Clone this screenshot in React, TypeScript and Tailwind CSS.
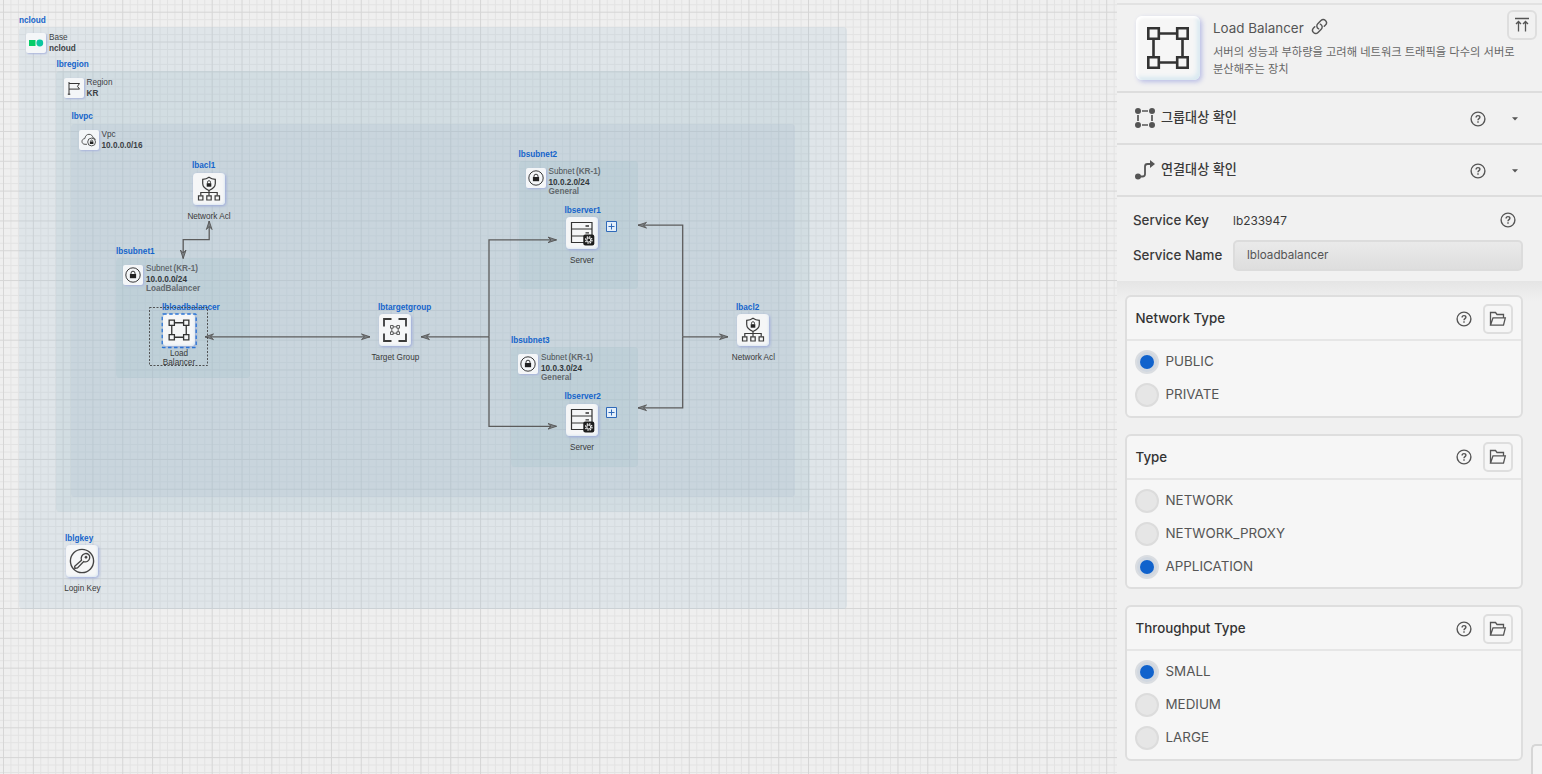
import type { ReactNode } from "react";

const label = "absolute whitespace-nowrap text-[8.2px] leading-[10px]";

function Name({ x, y, children }: { x: number; y: number; children: ReactNode }) {
  return (
    <span className={`${label} font-bold text-[#1564cb]`} style={{ left: x, top: y - 4 }}>
      {children}
    </span>
  );
}

function Zone({ x, y, w, h, className }: { x: number; y: number; w: number; h: number; className: string }) {
  return <div className={`absolute rounded-[4px] ${className}`} style={{ left: x, top: y, width: w, height: h }} />;
}

function ZoneHead({ x, y, icon, children }: { x: number; y: number; icon: ReactNode; children: ReactNode }) {
  return (
    <div className="absolute flex gap-[3px] whitespace-nowrap text-[8.2px] leading-[11px] text-[#3d4145]" style={{ left: x, top: y }}>
      <div className="flex h-[20px] w-[20px] shrink-0 items-center justify-center rounded-[2px] bg-[#f4f6f8] shadow-[1px_1px_2px_#a9b4dc]">
        {icon}
      </div>
      <div className="-mt-[1px]">{children}</div>
    </div>
  );
}

function Node({ x, y, icon, children }: { x: number; y: number; icon: ReactNode; children: ReactNode }) {
  return (
    <div className="absolute flex w-[64px] flex-col items-center" style={{ left: x - 16, top: y }}>
      <div className="flex h-[32px] w-[32px] items-center justify-center rounded-[4px] bg-[#f5f6f7] shadow-[1px_1px_3px_#9ba8da,inset_-1px_-1px_2px_#dfe9f2]">
        {icon}
      </div>
      <div className="mt-[7px] whitespace-nowrap text-center text-[8.2px] leading-[10px] text-[#3a3a3a]">{children}</div>
    </div>
  );
}

const LockIcon = () => (
  <svg width="16" height="16" viewBox="0 0 16 16" fill="none" stroke="#222">
    <circle cx="8" cy="8" r="7.2" strokeWidth="0.9" />
    <path d="M6 7.5V6.2a2 2 0 0 1 4 0v1.3" strokeWidth="0.9" />
    <rect x="4.900" y="7" width="6.200" height="4.200" fill="#222" stroke="none" />
  </svg>
);

const AclIcon = () => (
  <svg width="24" height="26" viewBox="0 0 24 26" fill="none" stroke="#3a3a3a" strokeWidth="1.2">
    <path d="M12 1.2c2 1.5 4 2 6.3 2.1v4.3c0 3-2.300 5.300-6.300 6.900-4-1.600-6.300-3.900-6.300-6.900V3.300C8 3.200 10 2.700 12 1.200Z" />
    <rect x="9.700" y="7.200" width="4.600" height="3.500" fill="#222" stroke="none" />
    <path d="M10.500 7.400V6.200a1.500 1.500 0 0 1 3 0v1.200" strokeWidth="0.900" />
    <path d="M12 14.500v5M3.800 19.500v-3h16.400v3" />
    <path d="M1.500 19.800h4.400v4.200H1.500zM9.800 19.800h4.400v4.200H9.800zM18.100 19.800h4.400v4.200h-4.400z" />
  </svg>
);

const BalancerIcon = ({ size, className = "" }: { size: number; className?: string }) => (
  <svg className={className} width={size} height={size} viewBox="0 0 44 44" fill="none" stroke="#333" strokeWidth="2.600">
    <path d="M2.300 2.300h10.500v10.500H2.300zM31.200 2.300h10.500v10.500H31.200zM2.300 31.200h10.500v10.500H2.300zM31.200 31.200h10.500v10.500H31.200zM12.800 7.500h18.400M12.800 36.500h18.400M7.500 12.800v18.400M36.500 12.800v18.400" />
  </svg>
);

const TargetIcon = () => (
  <svg width="24" height="24" viewBox="0 0 24 24" fill="none" stroke="#3a3a3a">
    <path d="M1 8.500V1h7.500M15.500 1H23v7.500M1 15.500V23h7.500M15.500 23H23v-7.500" strokeWidth="1.800" />
    <path d="M7.500 7.500h2.700v2.700H7.500zM13.800 7.500h2.700v2.700h-2.700zM7.500 13.800h2.700v2.700H7.500zM13.800 13.800h2.700v2.700h-2.700zM10.200 8.800h3.600M10.200 15.200h3.600M8.800 10.200v3.600M15.200 10.200v3.600" strokeWidth="0.800" />
  </svg>
);

const ServerIcon = () => (
  <svg width="26" height="26" viewBox="0 0 26 26" fill="none" stroke="#333" strokeWidth="1.200">
    <path d="M2.500 2.500h20.500v20H2.500zM2.500 9h20.500M2.500 16h20.500" />
    <path d="M16.500 6h3.500M16.500 12.800h3.500" strokeWidth="1.300" />
    <rect x="14.300" y="14.500" width="11" height="11" rx="2" fill="#1d1d1d" stroke="none" />
    <circle cx="19.800" cy="20" r="3.200" stroke="#fff" strokeWidth="1.200" strokeDasharray="1.500 1" />
    <circle cx="19.800" cy="20" r="2" stroke="#fff" strokeWidth="1" />
  </svg>
);

const KeyIcon = () => (
  <svg width="26" height="26" viewBox="0 0 26 26" fill="none" stroke="#444">
    <circle cx="13" cy="13" r="11.600" strokeWidth="1.400" />
    <path d="M12.500 12.300c-1-3 .5-6 3.600-6.700 2.700-.5 5 1.600 4.600 4.300-.4 3-3.200 4.600-6 3.700l-6.200 6.400-2.700.4-.1-2.200z" strokeWidth="1.300" />
    <circle cx="17" cy="9.200" r="1" fill="#333" />
  </svg>
);

const CELL = 7.454;

function gridPath(major: boolean) {
  let d = "";
  for (let i = -1; i < 150; i++) {
    if ((i % 4 === 0) !== major) continue;
    const x = (3.5 + i * CELL).toFixed(2);
    const y = (12.2 + i * CELL).toFixed(2);
    d += `M${x} 0V774M0 ${y}H1117`;
  }
  return d;
}

const Edges = () => (
  <svg className="absolute left-0 top-0" width="1117" height="774" fill="none" stroke="#5c5c5c" strokeWidth="1.300">
    <defs>
      <marker id="arrow" viewBox="-10 -4 11 8" markerWidth="11" markerHeight="8" markerUnits="userSpaceOnUse" refX="0" refY="0" orient="auto-start-reverse">
        <path d="M0 0L-8.500-2.800L-5.500 0L-8.500 2.800Z" fill="#7b8083" stroke="#565656" strokeWidth="0.900" />
      </marker>
    </defs>
    <g markerEnd="url(#arrow)">
      <path d="M209.200 221V239.700H183.200V258.500" markerStart="url(#arrow)" />
      <path d="M205 336.800H370" markerStart="url(#arrow)" />
      <path d="M489 336.800H421" />
      <path d="M489 336.800V239.900H556.500" />
      <path d="M489 336.800V426.300H556.500" />
      <path d="M682.700 336.800V225.200H638" />
      <path d="M682.700 336.800V407.800H638" />
      <path d="M682.700 336.800H728" />
    </g>
    <rect x="149.500" y="307.500" width="58" height="58" stroke="#444" strokeWidth="0.900" strokeDasharray="2 1.500" />
    <rect x="162.200" y="314" width="34" height="33.500" rx="1" stroke="#2a74d6" strokeWidth="1.300" strokeDasharray="3.500 2.500" />
  </svg>
);

function Expand({ x, y }: { x: number; y: number }) {
  return (
    <svg className="absolute" style={{ left: x, top: y }} width="11" height="11" viewBox="0 0 11 11" stroke="#2f69b8" fill="#e4effa">
      <path d="M.5.5h10v10H.5zM5.500 2.500v6M2.500 5.500h6" />
    </svg>
  );
}

function Subnet({ ip, kind }: { ip: string; kind: string }) {
  return (
    <div className="-mt-[1px] font-bold text-[#63696d]">
      <div className="flex gap-[1.500px]">
        <span className="font-normal text-[#4b5054]">Subnet</span>
        <span>(KR-1)</span>
      </div>
      <div className="text-[#33383c]">{ip}</div>
      <div className="-mt-[2px]">{kind}</div>
    </div>
  );
}

function Diagram() {
  return (
    <main className="relative h-[774px] w-[1117px] shrink-0 overflow-hidden bg-[#efefef] font-['Liberation_Sans',Arial,sans-serif]">
      <svg className="absolute left-0 top-0" width="1117" height="774" fill="none">
        <path d={gridPath(false)} stroke="#e3e3e3" />
        <path d={gridPath(true)} stroke="#d6d6d6" />
      </svg>

      <Zone x={19} y={27} w={828} h={581.500} className="bg-[#a2bfd0]/20" />
      <Zone x={56} y={71} w={754} h={441} className="bg-[#9ebdca]/20" />
      <Zone x={71} y={123.500} w={724} h={373.500} className="bg-[#a5b8cc]/20" />
      <Zone x={116} y={258} w={134} h={120} className="bg-[#9cbcca]/20" />
      <Zone x={518.500} y={161} w={119} h={127.500} className="bg-[#9cbcca]/20" />
      <Zone x={511} y={347} w={127} h={120} className="bg-[#9cbcca]/20" />

      <Name x={19} y={20}>ncloud</Name>
      <Name x={56.500} y={64}>lbregion</Name>
      <Name x={71.500} y={116}>lbvpc</Name>
      <Name x={192} y={165}>lbacl1</Name>
      <Name x={116} y={251}>lbsubnet1</Name>
      <Name x={518.500} y={154}>lbsubnet2</Name>
      <Name x={511} y={340}>lbsubnet3</Name>
      <Name x={162} y={307}>lbloadbalancer</Name>
      <Name x={378} y={307}>lbtargetgroup</Name>
      <Name x={564.500} y={210}>lbserver1</Name>
      <Name x={564.500} y={396}>lbserver2</Name>
      <Name x={736} y={307}>lbacl2</Name>
      <Name x={65} y={538}>lblgkey</Name>

      <ZoneHead
        x={26}
        y={33.300}
        icon={
          <svg width="16" height="8" viewBox="0 0 16 8">
            <rect x="1" y="1" width="6.500" height="6" fill="#05cd68" />
            <circle cx="11.800" cy="4" r="3.400" fill="#0bc6a0" />
          </svg>
        }
      >
        <div>Base</div>
        <div className="font-bold">ncloud</div>
      </ZoneHead>
      <ZoneHead
        x={63.500}
        y={78}
        icon={
          <svg width="14" height="14" viewBox="0 0 14 14" fill="none" stroke="#333">
            <path d="M2 1v12.500M.8 13.200h2.500M2 2.500h10.500l-2 2.800 2 2.800H2" strokeWidth="1" />
          </svg>
        }
      >
        <div>Region</div>
        <div className="font-bold">KR</div>
      </ZoneHead>
      <ZoneHead
        x={78.500}
        y={130}
        icon={
          <svg width="16" height="14" viewBox="0 0 16 14" fill="none" stroke="#444" strokeWidth="0.900">
            <path d="M6 11.300H4C2 11.300 1 10 1 8.500s1-2.800 2.800-2.900C4.200 3 5.800 1.300 8 1.300c2.300 0 3.600 1.500 4 3.500 1.300.2 2 .8 2.400 1.800" />
            <circle cx="10.600" cy="9" r="3.900" />
            <path d="M9.700 8.500v-.8a1 1 0 0 1 1.900 0v.8" />
            <rect x="8.900" y="8.500" width="3.500" height="2.500" fill="#222" stroke="none" />
          </svg>
        }
      >
        <div>Vpc</div>
        <div className="font-bold">10.0.0.0/16</div>
      </ZoneHead>
      <ZoneHead x={123} y={264.600} icon={<LockIcon />}>
        <Subnet ip="10.0.0.0/24" kind="LoadBalancer" />
      </ZoneHead>
      <ZoneHead x={525.500} y={167.700} icon={<LockIcon />}>
        <Subnet ip="10.0.2.0/24" kind="General" />
      </ZoneHead>
      <ZoneHead x={518} y={354} icon={<LockIcon />}>
        <Subnet ip="10.0.3.0/24" kind="General" />
      </ZoneHead>

      <Node x={193} y={173} icon={<AclIcon />}>Network Acl</Node>
      <Node x={163} y={314} icon={<BalancerIcon size={22} />}>
        <div className="-mt-[4px] leading-[9px]">Load<br />Balancer</div>
      </Node>
      <Node x={379.400} y={314} icon={<TargetIcon />}>Target Group</Node>
      <Node x={566} y={217.400} icon={<ServerIcon />}>Server</Node>
      <Node x={566} y={404} icon={<ServerIcon />}>Server</Node>
      <Node x={737.400} y={314} icon={<AclIcon />}>Network Acl</Node>
      <Node x={66.400} y={545.400} icon={<KeyIcon />}>Login Key</Node>
      <Edges />
      <Expand x={605.500} y={221} />
      <Expand x={605.500} y={407} />
    </main>
  );
}

const Help = ({ className = "" }: { className?: string }) => (
  <svg className={className} width="16" height="16" viewBox="0 0 16 16" fill="none" stroke="#555" strokeWidth="1.400">
    <circle cx="8" cy="8" r="6.900" />
    <path d="M6.100 6.500c0-1.200.8-1.900 1.900-1.900s1.900.7 1.900 1.700c0 1.300-1.900 1.400-1.900 2.900" />
    <path d="M8 10.300v1.500" />
  </svg>
);

function FolderButton() {
  return (
    <button className="flex h-[30px] w-[30px] items-center justify-center rounded-[5px] border-2 border-[#dedede]">
      <svg width="18" height="16" viewBox="0 0 18 16" fill="none" stroke="#555" strokeWidth="1.300">
        <path d="M1.500 14.200V1.500h5l1.500 2h6.500v2.700M1.500 14.200L4 6.900h12.300l-1.800 7.300z" />
      </svg>
    </button>
  );
}

function OptionCard({ title, options, selected }: { title: string; options: string[]; selected: string }) {
  return (
    <section className="rounded-[6px] border-2 border-[#dedede] bg-[#f6f6f6]">
      <header className="flex h-[44px] items-center border-b-2 border-[#e6e6e6] pl-[8.500px] pr-[8px] pt-[1px]">
        <h2 className="flex-1 text-[13.350px] font-medium text-[#333]">{title}</h2>
        <Help className="mr-[11px]" />
        <FolderButton />
      </header>
      <div className="flex flex-col gap-[9px] px-[8px] pb-[8.500px] pt-[9px]">
        {options.map((o) => (
          <label key={o} className="flex h-[24px] items-center gap-[6.500px] text-[13.400px] text-[#555]">
            <span
              className={
                o === selected
                  ? "flex h-[24px] w-[24px] items-center justify-center rounded-full border-2 border-[#dadde1] bg-[#d0d7e0]"
                  : "flex h-[24px] w-[24px] items-center justify-center rounded-full border-2 border-[#dcdcdc] bg-[#e6e6e6]"
              }
            >
              {o === selected && <span className="h-[14px] w-[14px] rounded-full bg-[#1062cc]" />}
            </span>
            <span className="-mt-[2px] leading-[20px]">{o}</span>
          </label>
        ))}
      </div>
    </section>
  );
}

function FoldRow({ icon, title }: { icon: ReactNode; title: string }) {
  return (
    <div className="flex h-[52px] items-center border-b-2 border-[#dddddd] pl-[18px] pr-[24px]">
      {icon}
      <span className="ml-[6px] flex-1 text-[13.100px] font-medium text-[#3a3a3a]">{title}</span>
      <Help className="mr-[26px] mt-[1px]" />
      <svg className="mt-[1px]" width="6" height="4" viewBox="0 0 6 4" fill="#555">
        <path d="M0 .3h6L3 3.500z" />
      </svg>
    </div>
  );
}

function Panel() {
  return (
    <aside className="relative flex h-[774px] w-[425px] flex-col overflow-hidden bg-[#f1f1f1] pt-[3px] font-[Inter,'Noto_Sans_CJK_KR',sans-serif]">
      <div className="flex h-[90px] border-b-2 border-t-2 border-b-[#dddddd] border-t-[#e2e2e2] pl-[19px] pr-[5px]">
        <div className="mt-[11px] flex h-[64px] w-[64px] shrink-0 items-center justify-center rounded-[6px] bg-[#f6f6f6] shadow-[2px_2px_5px_#b9bde6,inset_2px_2px_3px_#ffffff,inset_-3px_-3px_4px_#d9e9f1]">
          <BalancerIcon size={44} className="-ml-px -mt-px" />
        </div>
        <div className="ml-[13px] mt-[13px] flex-1">
          <div className="flex items-center gap-[7px] text-[13.400px] leading-[20px] text-[#555]">
            Load Balancer
            <svg className="-mt-[3px]" width="17" height="17" viewBox="0 0 24 24" fill="none" stroke="#555" strokeWidth="2" strokeLinecap="round">
              <path d="M13.190 8.688a4.500 4.500 0 0 1 1.242 7.244l-4.500 4.500a4.500 4.500 0 0 1-6.364-6.364l1.757-1.757m13.350-.622 1.757-1.757a4.500 4.500 0 0 0-6.364-6.364l-4.500 4.500a4.500 4.500 0 0 0 1.242 7.244" />
            </svg>
          </div>
          <p className="mt-[6px] whitespace-nowrap text-[11.250px] leading-[17px] text-[#666]">
            서버의 성능과 부하량을 고려해 네트워크 트래픽을 다수의 서버로
            <br />
            분산해주는 장치
          </p>
        </div>
        <button className="-ml-[30px] mt-[5px] flex h-[30px] w-[30px] shrink-0 items-center justify-center rounded-[6px] border-2 border-[#dedede]">
          <svg width="16" height="16" viewBox="0 0 16 16" fill="none" stroke="#555" strokeWidth="1.300">
            <path d="M1 1.500h14M4.500 14.500V5M11.500 14.500V5M2 7l2.500-2.500L7 7M9 7l2.500-2.500L14 7" />
          </svg>
        </button>
      </div>
      <FoldRow
        title="그룹대상 확인"
        icon={
          <svg width="20" height="20" viewBox="0 0 20 20" fill="#555" stroke="#555" strokeWidth="1.700">
            <path d="M7 3h6M7 17h6M3 7v6M17 7v6" />
            <g stroke="none">
              <circle cx="3" cy="3" r="3" />
              <circle cx="17" cy="3" r="3" />
              <circle cx="3" cy="17" r="3" />
              <circle cx="17" cy="17" r="3" />
            </g>
          </svg>
        }
      />
      <FoldRow
        title="연결대상 확인"
        icon={
          <svg width="20" height="20" viewBox="0 0 20 20" fill="none" stroke="#555" strokeWidth="1.800">
            <path d="M3 16.500h4.500c1.500 0 2.500-1 2.500-2.500V6.500C10 5 11 4 12.500 4H16" />
            <circle cx="3" cy="16.500" r="3" fill="#555" stroke="none" />
            <path d="M15 0l5 4-5 4z" fill="#555" stroke="none" />
          </svg>
        }
      />
      <div className="flex h-[84px] flex-col gap-[4px] px-[16px] pr-[19px] pt-[8px] text-[13.350px] text-[#3a3a3a]">
        <div className="flex h-[31px] items-center">
          <span className="-mt-[1px] w-[100px] font-medium">Service Key</span>
          <span className="flex-1 text-[11.900px]">lb233947</span>
          <Help className="-mt-[2px] mr-[7px]" />
        </div>
        <div className="flex h-[31px] items-center">
          <span className="-mt-[1px] w-[100px] whitespace-nowrap font-medium">Service Name</span>
          <div className="flex h-[31px] flex-1 items-center rounded-[5px] border-2 border-[#dcdcdc] bg-linear-to-b from-[#eaeaea] to-[#dedede] pl-[12px] text-[11.650px] text-[#555]">
            <span>lbloadbalancer</span>
          </div>
        </div>
      </div>
      <div className="relative flex flex-1 flex-col gap-[16px] bg-linear-to-b from-[#e5e5e5] to-[#f0f0f0] to-[20px] pl-[8px] pr-[19px] pt-[14px]">
        <OptionCard title="Network Type" options={["PUBLIC", "PRIVATE"]} selected="PUBLIC" />
        <OptionCard title="Type" options={["NETWORK", "NETWORK_PROXY", "APPLICATION"]} selected="APPLICATION" />
        <OptionCard title="Throughput Type" options={["SMALL", "MEDIUM", "LARGE"]} selected="SMALL" />
      </div>
      <div className="absolute bottom-0 right-0 h-[30px] w-[11px] rounded-tl-[5px] border-l-2 border-t-2 border-[#d6d6d6] bg-[#f4f4f4]" />
    </aside>
  );
}

export default function App() {
  return (
    <div className="flex h-[774px] w-[1542px] overflow-hidden">
      <Diagram />
      <Panel />
    </div>
  );
}
